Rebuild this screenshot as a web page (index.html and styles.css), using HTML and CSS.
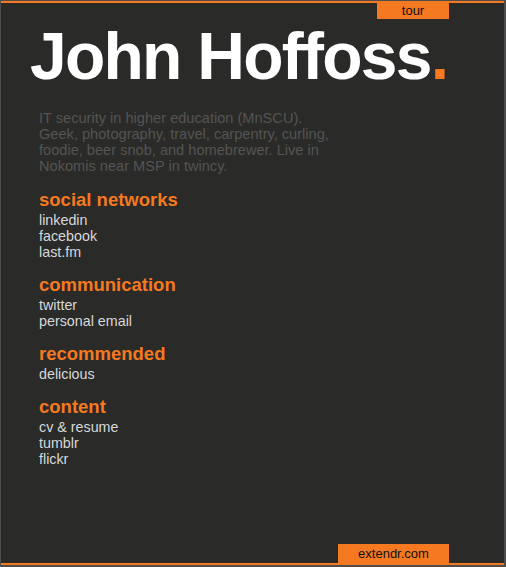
FILE: index.html
```html
<!DOCTYPE html>
<html>
<head>
<meta charset="utf-8">
<link rel="stylesheet" href="styles.css">
</head>
<body>
<div class="frame">
  <div class="page">
    <div class="topbar"><a class="tab tour" href="#">tour</a></div>
    <h1 class="name">John Hoffoss<span class="dot">.</span></h1>
    <p class="bio">IT security in higher education (MnSCU). Geek, photography, travel, carpentry, curling, foodie, beer snob, and homebrewer. Live in Nokomis near MSP in twincy.</p>
    <div class="section first">
      <h2>social networks</h2>
      <ul>
        <li><a href="#">linkedin</a></li>
        <li><a href="#">facebook</a></li>
        <li><a href="#">last.fm</a></li>
      </ul>
    </div>
    <div class="section">
      <h2>communication</h2>
      <ul>
        <li><a href="#">twitter</a></li>
        <li><a href="#">personal email</a></li>
      </ul>
    </div>
    <div class="section">
      <h2>recommended</h2>
      <ul>
        <li><a href="#">delicious</a></li>
      </ul>
    </div>
    <div class="section">
      <h2>content</h2>
      <ul>
        <li><a href="#">cv &amp; resume</a></li>
        <li><a href="#">tumblr</a></li>
        <li><a href="#">flickr</a></li>
      </ul>
    </div>
    <div class="spacer"></div>
    <div class="bottombar"><a class="tab footer" href="#">extendr.com</a></div>
  </div>
</div>
</body>
</html>
```

FILE: styles.css
```css
html, body {
  margin: 0;
  padding: 0;
  background: #4d4d4d;
  height: 567px;
  overflow: hidden;
}
.frame {
  padding: 1px 2px 2px 1px;
  box-sizing: border-box;
  height: 567px;
}
.page {
  background: #2a2a28;
  border-top: 2px solid #f47920;
  border-bottom: 2px solid #f47920;
  height: 564px;
  box-sizing: border-box;
  display: flex;
  flex-direction: column;
  font-family: "Liberation Sans", Arial, sans-serif;
}
.topbar, .bottombar {
  display: flex;
  padding-left: 376px;
}
.tab {
  display: block;
  background: #f47920;
  color: #111;
  text-decoration: none;
  text-align: center;
  font-size: 13px;
}
.tour {
  width: 72px;
  height: 16px;
  line-height: 15px;
}
.footer {
  margin-left: -39px;
  width: 111px;
  height: 19px;
  line-height: 20px;
}
.name {
  margin: 2px 0 0 29px;
  font-size: 66px;
  line-height: 70px;
  font-weight: bold;
  color: #fff;
  letter-spacing: -1.75px;
}
.dot { color: #f47920; }
.bio {
  margin: 19px 0 0 38px;
  width: 300px;
  font-size: 14.6px;
  line-height: 16px;
  color: #555553;
}
.section {
  margin: 15px 0 0 38px;
}
.section.first {
  margin-top: 16px;
}
.section h2 {
  margin: 0 0 2px;
  font-size: 18.5px;
  line-height: 20px;
  color: #f47920;
  font-weight: bold;
}
.section ul {
  list-style: none;
  margin: 0;
  padding: 0;
}
.section li {
  font-size: 14.3px;
  line-height: 16px;
}
.section a {
  color: #d6d8da;
  text-decoration: none;
}
.spacer { flex: 1; }
```
